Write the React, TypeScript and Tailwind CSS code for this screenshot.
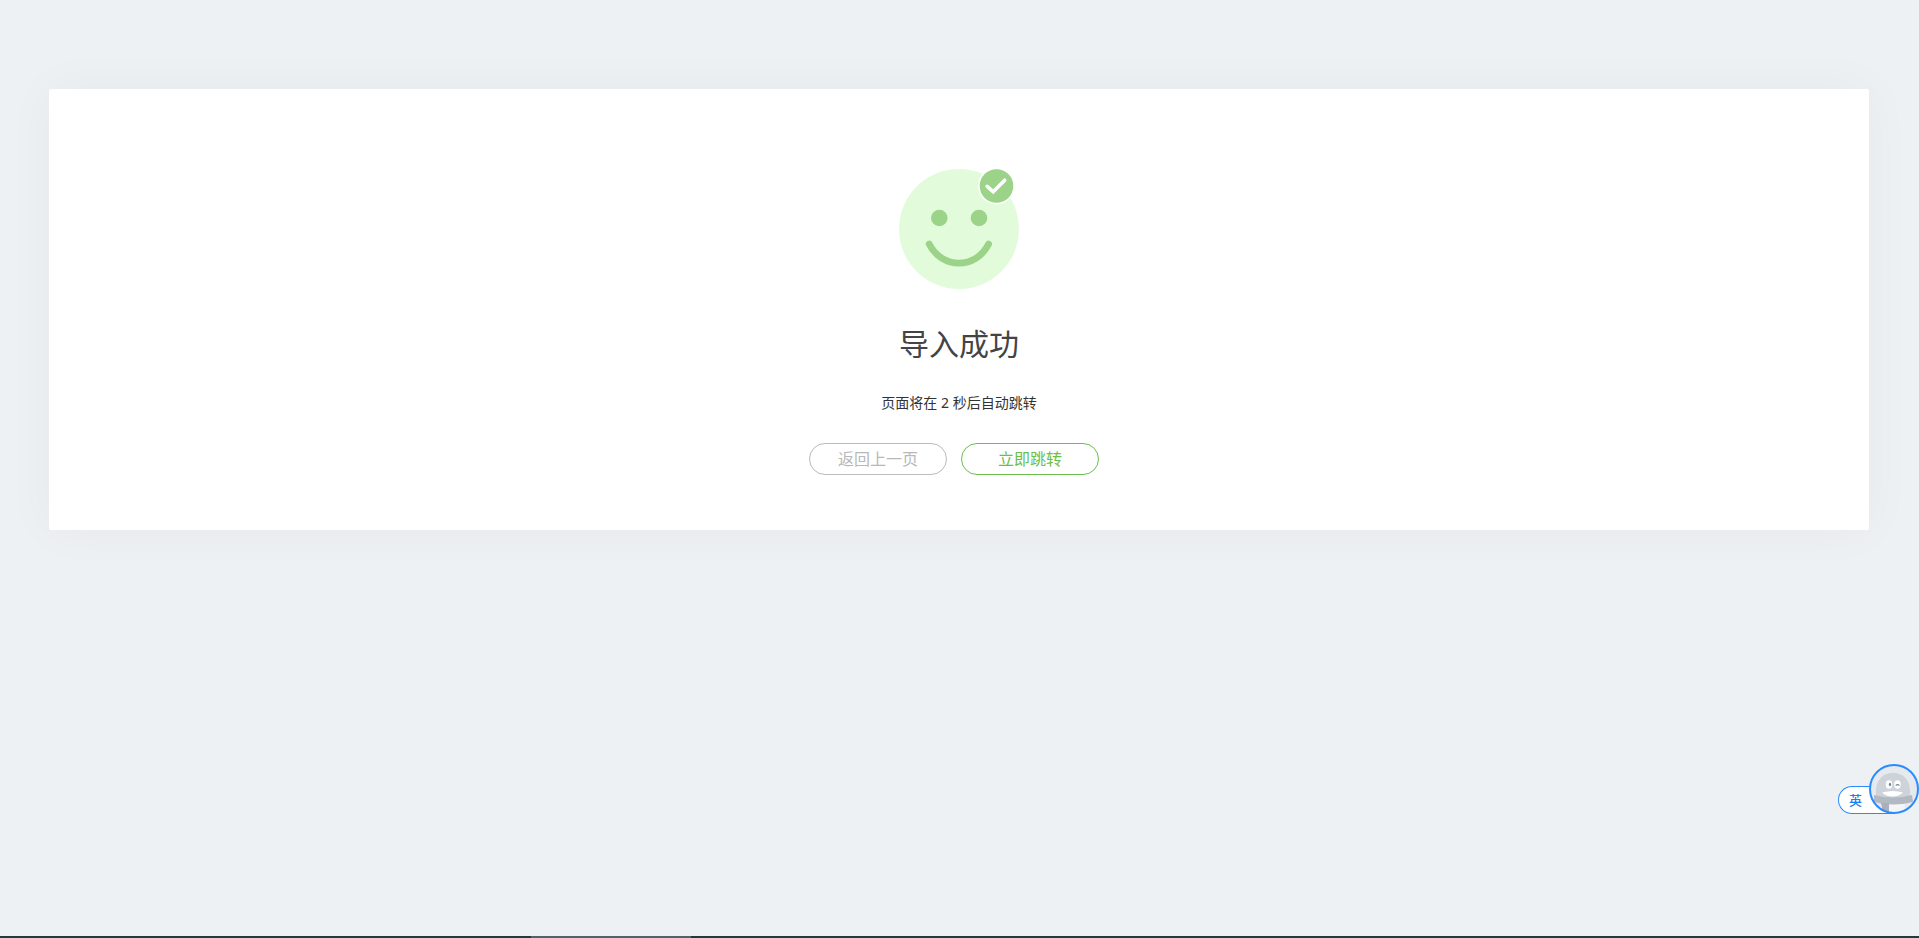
import React from "react";

function SuccessFace() {
  return (
    <svg className="size-[120px]" viewBox="0 0 120 120" role="img" aria-label="成功">
      <circle cx="60" cy="60" r="60" fill="#e2fcdb" />
      <circle cx="40.3" cy="49" r="8.3" fill="#9bd388" />
      <circle cx="80" cy="49" r="8.3" fill="#9bd388" />
      <path
        d="M30.2 75 C43 100.500 77 100.500 89.600 75"
        fill="none"
        stroke="#9bd388"
        strokeWidth="6.800"
        strokeLinecap="round"
      />
      <circle cx="97.500" cy="17" r="18.500" fill="#fff" />
      <circle cx="97.500" cy="17" r="16.800" fill="#9bd388" />
      <path
        d="M88.200 17.300 L94.200 22.800 L105.700 11.200"
        fill="none"
        stroke="#fff"
        strokeWidth="3.600"
        strokeLinecap="round"
      />
    </svg>
  );
}

function Mascot() {
  return (
    <svg className="absolute right-0 top-0 size-[50px]" viewBox="0 0 50 50" aria-hidden="true">
      <defs>
        <clipPath id="avatar">
          <circle cx="25" cy="25" r="24" />
        </clipPath>
      </defs>
      <circle cx="25" cy="25" r="24" fill="#e6e9ee" />
      <g clipPath="url(#avatar)">
        <path d="M7 36 V27 C7 2.500 41 2.500 41 27 V36 Z" fill="#ced2d9" />
        <path d="M12 38 H36 V50 H12 Z" fill="#f4f5f8" />
        <path d="M5 31 Q24 36 43 31 L44 38 Q24 43 5 38 Z" fill="#b3b9c2" />
        <path d="M12 39 H20 V50 H14 Z" fill="#a9b0bb" />
        <ellipse cx="20" cy="20.500" rx="3.300" ry="4.200" fill="#fff" />
        <ellipse cx="28.500" cy="20.500" rx="3.300" ry="4.200" fill="#fff" />
        <ellipse cx="21" cy="20.500" rx="1.200" ry="1.700" fill="#7d8794" />
        <path d="M26.800 21.500 Q28.500 19.800 30.500 21.500" fill="none" stroke="#7d8794" strokeWidth="1.200" />
        <path d="M13 28.500 Q24 25.500 34 28.500 Q30 32.500 23.500 32.500 Q17 32.500 13 28.500 Z" fill="#fff" />
      </g>
      <circle cx="25" cy="25" r="24" fill="none" stroke="#2a8bff" strokeWidth="2" />
    </svg>
  );
}

export default function App() {
  return (
    <div className="flex min-h-screen flex-col bg-[#edf1f4] font-['Noto_Sans','Noto_Sans_CJK_SC',sans-serif]">
      <main className="mt-[89px] mr-[50px] mb-12 ml-[49px] flex flex-col items-center rounded-xs bg-white pt-20 pb-[55px] shadow-[0_0_50px_rgba(0,30,40,0.04)]">
        <SuccessFace />
        <h1 className="mt-[33px] text-[30px] leading-[44px] text-[#444]">导入成功</h1>
        <p className="mt-[27px] text-sm leading-5 text-[#333]">页面将在 2 秒后自动跳转</p>
        <div className="mt-[30px] mr-2.5 flex gap-3.5">
          <button
            type="button"
            className="h-8 w-[138px] rounded-full border border-[#bbb] bg-white text-base leading-none text-[#b8b8b8]"
          >
            返回上一页
          </button>
          <button
            type="button"
            className="h-8 w-[138px] rounded-full border border-[#6abf4b] bg-white text-base leading-none text-[#6abf4b]"
          >
            立即跳转
          </button>
        </div>
      </main>

      <button
        type="button"
        aria-label="输入法 英"
        className="fixed right-0 bottom-[124px] h-[50px] w-[81px] text-[#1a80f5]"
      >
        <span className="absolute bottom-0 left-0 flex h-7 w-14 items-center rounded-l-full border border-r-0 border-[#2a8bff] bg-white pt-0.5 pl-2.5 text-[13px] font-medium">
          英
        </span>
        <Mascot />
      </button>

      <footer className="mt-auto flex h-0.5 bg-[#203a43]">
        <div className="ml-[531px] w-40 bg-[#50636b]" />
      </footer>
    </div>
  );
}
